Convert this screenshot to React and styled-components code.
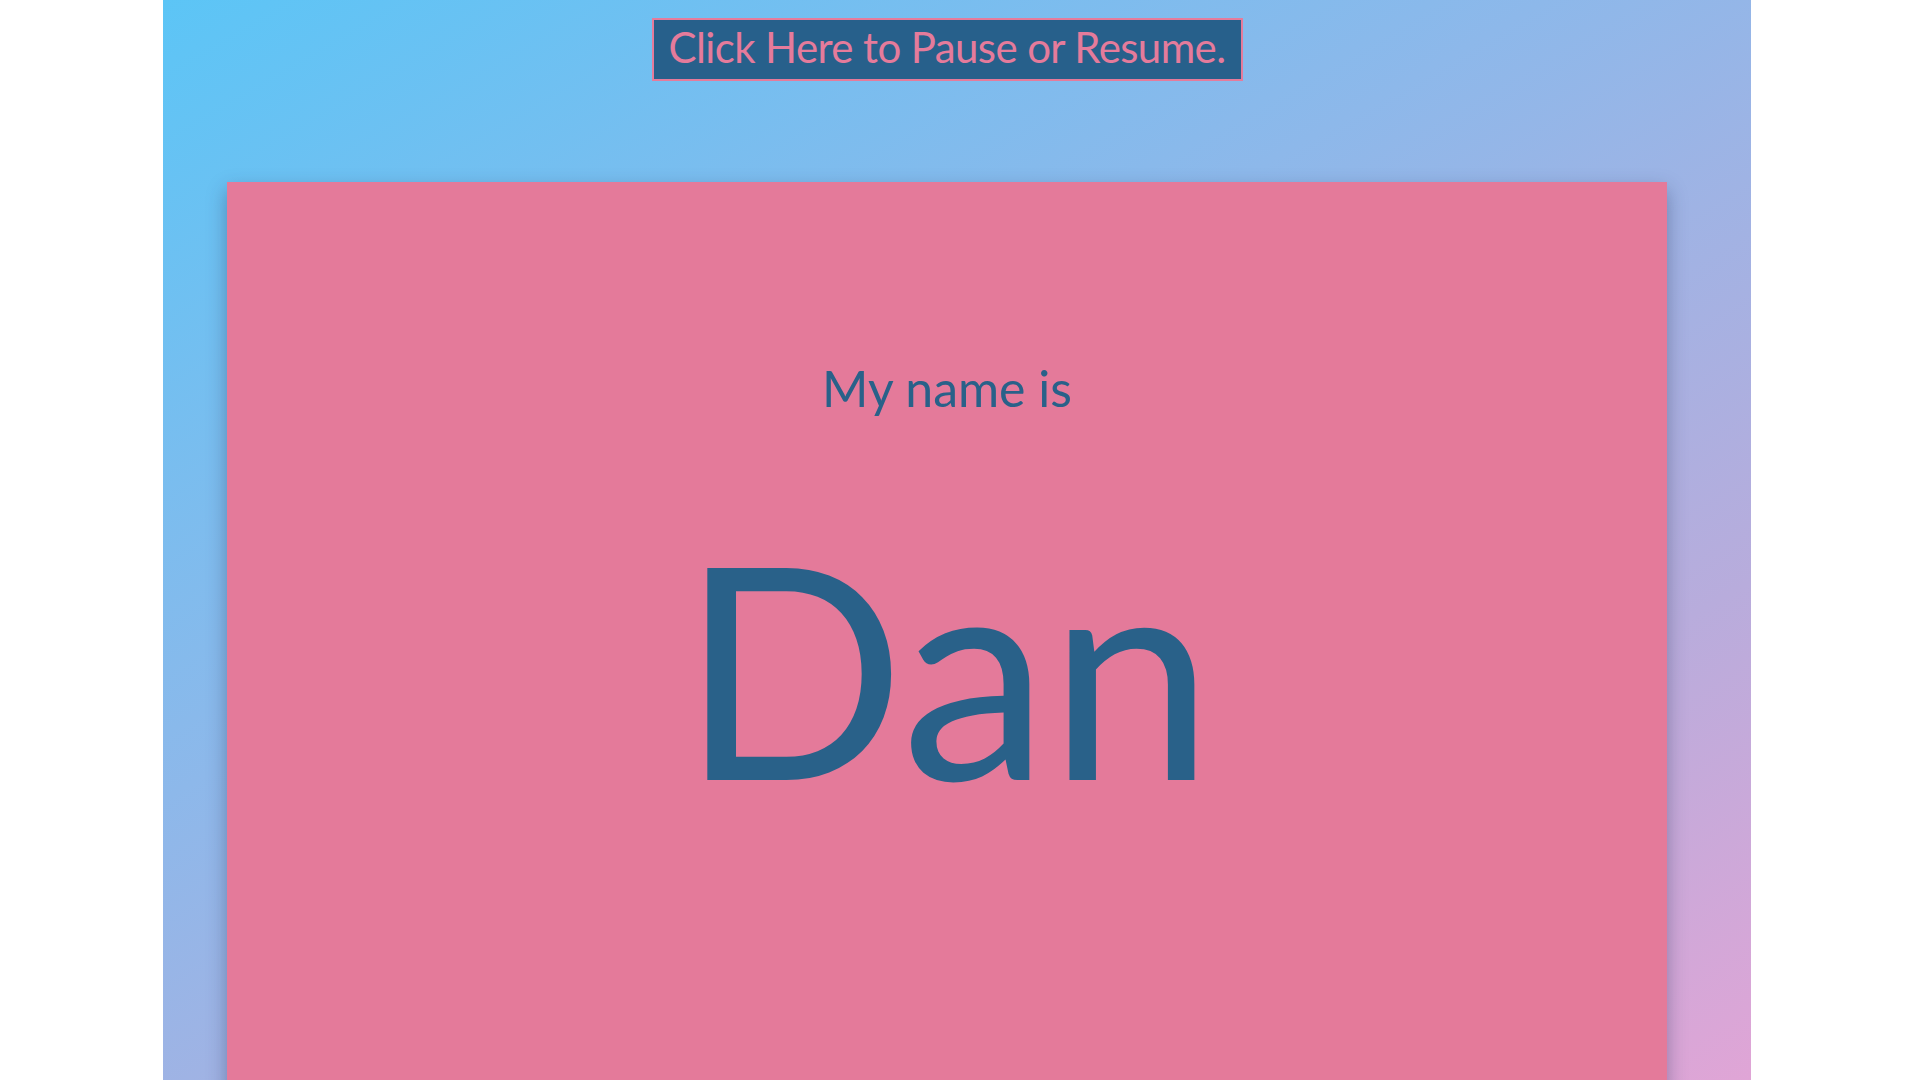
import React from "react";
import styled, { createGlobalStyle } from "styled-components";

const GlobalStyle = createGlobalStyle`
  html, body {
    margin: 0;
    padding: 0;
    background: #ffffff;
    overflow: hidden;
  }
  body {
    font-family: Lato, "Noto Sans", sans-serif;
  }
`;

export default function App() {
  return (
    <>
      <GlobalStyle />
      <Page>
        <Column>
          <PauseButton type="button">Click Here to Pause or Resume.</PauseButton>
          <NameCard>
            <Intro>My name is</Intro>
            <Name>Dan</Name>
          </NameCard>
        </Column>
      </Page>
    </>
  );
}

const Page = styled.div`
  width: 1920px;
  height: 1080px;
  overflow: hidden;
`;

const Column = styled.main`
  box-sizing: border-box;
  width: 1588px;
  height: 1080px;
  margin-left: 163px;
  padding: 18px 84px 0 64px;
  display: flex;
  flex-direction: column;
  align-items: center;
  overflow: hidden;
  background: linear-gradient(150deg, #5cc5f6 0%, #8db8ea 40%, #b8acdc 75%, #e0a5d6 100%);
`;

const PauseButton = styled.button`
  box-sizing: border-box;
  width: 591px;
  height: 63px;
  padding: 0 0 5px;
  border: 2px solid #e57b9b;
  background: #27608b;
  color: #e57b9b;
  font-family: Lato, "Noto Sans", sans-serif;
  font-size: 42px;
  line-height: 54px;
  letter-spacing: -0.6px;
  white-space: nowrap;
  cursor: pointer;
`;

const NameCard = styled.section`
  box-sizing: border-box;
  width: 1440px;
  height: 1100px;
  margin-top: 101px;
  padding-top: 176px;
  flex-shrink: 0;
  display: flex;
  flex-direction: column;
  align-items: center;
  background: #e47a9a;
  color: #296189;
  box-shadow: 0 8px 18px rgba(40, 50, 90, 0.4);
`;

const Intro = styled.div`
  font-size: 50px;
  line-height: 60px;
`;

const Name = styled.div`
  margin-top: 100px;
  font-size: 296px;
  line-height: 296px;
`;
